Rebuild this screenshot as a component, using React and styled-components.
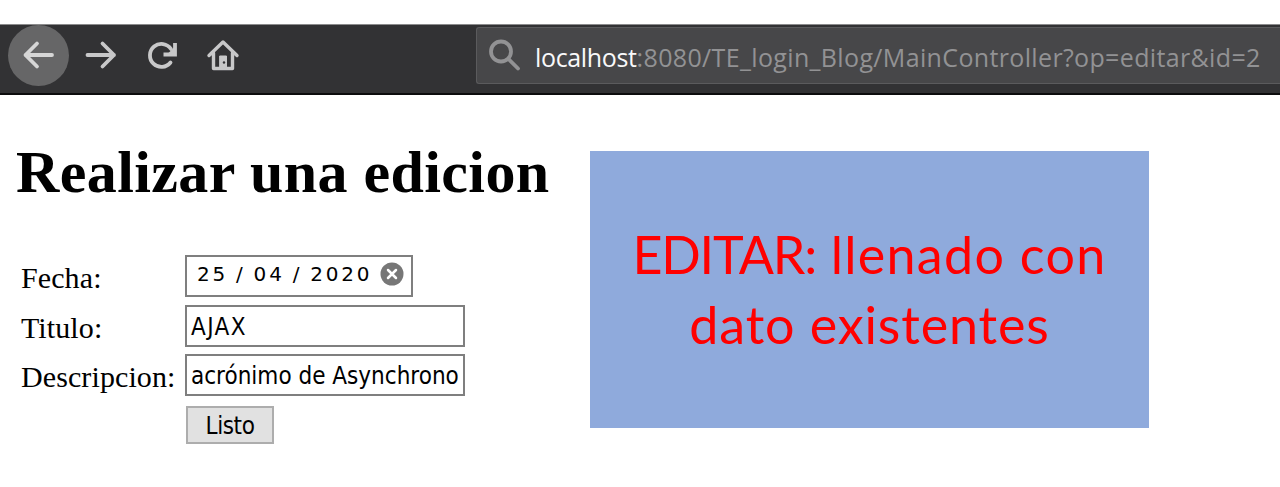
import React from "react";
import styled, { createGlobalStyle } from "styled-components";

const GlobalStyle = createGlobalStyle`
  * { box-sizing: border-box; }
  body { margin: 0; background: #fff; overflow: hidden; }
`;

const Page = styled.div`
  width: 1280px;
  height: 487px;
  padding-top: 24px;
  overflow: hidden;
  color: #000;
  font-family: "Liberation Serif", serif;
`;

const Toolbar = styled.header`
  display: flex;
  align-items: flex-start;
  height: 71px;
  padding-left: 8px;
  background: #323234;
  border-top: 1px solid #8b8b8c;
  border-bottom: 2px solid #0c0c0d;
`;

const NavButtons = styled.nav`
  display: flex;
  align-items: center;
  width: 468px;
  height: 61px;
`;

const NavButton = styled.button`
  display: flex;
  align-items: center;
  justify-content: center;
  width: ${(p) => p.$width}px;
  height: 61px;
  padding: 0 0 1px;
  border: 0;
  border-radius: 50%;
  background: ${(p) => (p.$active ? "#666667" : "transparent")};
  color: ${(p) => (p.$active ? "#d6d6d6" : "#c8c8c9")};
`;

const Icon = styled.svg`
  display: block;
  flex: none;
  fill: none;
  stroke: currentColor;
  stroke-width: 3.8;
  stroke-linecap: round;
  stroke-linejoin: round;
`;

const AddressBar = styled.div`
  display: flex;
  flex: 1;
  align-items: center;
  height: 57px;
  margin-top: 2px;
  padding-left: 11px;
  border: 1px solid #5b5b5d;
  border-right: 0;
  border-radius: 3px 0 0 3px;
  background: #474749;
  color: #929294;
`;

const Url = styled.span`
  padding: 2px 0 0 13px;
  font: 25px/36px "Open Sans", sans-serif;
  letter-spacing: 0.35px;
  white-space: nowrap;
`;

const Host = styled.span`
  color: #f9f9fa;
  letter-spacing: -0.35px;
`;

const Content = styled.main`
  display: flex;
  align-items: flex-start;
`;

const Editor = styled.section`
  width: 590px;
  padding: 43px 0 0 16px;
`;

const Title = styled.h1`
  margin: 0;
  font-size: 60px;
  line-height: 69px;
  letter-spacing: 0.4px;
  white-space: nowrap;
`;

const Form = styled.form`
  display: grid;
  grid-template-columns: 164px 280px;
  grid-auto-rows: 42px;
  row-gap: 7.6px;
  margin-top: 48px;
  padding-left: 5px;
`;

const Label = styled.label`
  padding-top: 5px;
  font-size: 30px;
  line-height: 35px;
  letter-spacing: 0.1px;
  white-space: nowrap;
`;

const Field = styled.div`
  display: flex;
  align-items: center;
  width: ${(p) => p.$width}px;
  height: 42px;
  padding: ${(p) => p.$drop || 0}px 0 0 ${(p) => p.$inset}px;
  border: 2px solid #7f7f7f;
  background: #fff;
  font: 24px/30px "DejaVu Sans Condensed", "DejaVu Sans", sans-serif;
  font-stretch: condensed;
  letter-spacing: ${(p) => p.$spacing || 0}px;
  white-space: nowrap;
`;

const DateParts = styled.div`
  display: flex;
  gap: 8px;
  padding-bottom: 4px;
  font: 20px/28px "DejaVu Sans", sans-serif;
  letter-spacing: 2.8px;
`;

const ClearIcon = styled(Icon)`
  margin: 0 0 4px 8px;
  color: #777;
`;

const Submit = styled.button`
  grid-column: 2;
  width: 88px;
  height: 38px;
  margin: 2px 0 0 1px;
  padding: 2px 0 0;
  border: 2px solid #adadad;
  background: #e1e1e1;
  color: #000;
  font: 24px/30px "DejaVu Sans Condensed", "DejaVu Sans", sans-serif;
  font-stretch: condensed;
  letter-spacing: -0.4px;
`;

const Note = styled.aside`
  display: flex;
  flex-direction: column;
  align-items: center;
  width: 559px;
  height: 277px;
  margin-top: 56px;
  padding-top: 68px;
  background: #8faadc;
  color: #f00;
  font: 52px/70px Lato, sans-serif;
  white-space: nowrap;
`;

const NoteLine = styled.span`
  letter-spacing: ${(p) => p.$spacing}px;
`;

const NoteLead = styled.span`
  letter-spacing: -1.2px;
`;

export default function App() {
  return (
    <>
      <GlobalStyle />
      <Page>
        <Toolbar>
          <NavButtons>
            <NavButton type="button" aria-label="Atrás" $width={61} $active>
              <Icon width="34" height="32" viewBox="0 0 34 32">
                <path d="M30 16H3.500M15 4.500L3.500 16l11.500 11.500" />
              </Icon>
            </NavButton>
            <NavButton type="button" aria-label="Adelante" $width={64}>
              <Icon width="34" height="32" viewBox="0 0 34 32">
                <path d="M3.500 16H30M18.500 4.500L30 16 18.500 27.500" />
              </Icon>
            </NavButton>
            <NavButton type="button" aria-label="Recargar" $width={60}>
              <Icon width="32" height="32" viewBox="0 0 32 32">
                <path d="M23.500 23.500A11.5 11.5 0 1 1 24 10" />
                <path d="M28 4v11.500H16.500" strokeLinecap="butt" strokeLinejoin="miter" />
                <path d="M28 7.500v8h-8z" fill="currentColor" stroke="none" />
              </Icon>
            </NavButton>
            <NavButton type="button" aria-label="Inicio" $width={60}>
              <Icon width="34" height="32" viewBox="0 0 34 32">
                <path d="M3 16.500L17 3l14 13.500M7.500 14v15.500h19V14" strokeWidth="3.4" />
                <path d="M14 17h6.500v12H14z" fill="currentColor" strokeWidth="1" />
                <circle cx="18" cy="23.5" r="1.2" fill="#323234" stroke="none" />
              </Icon>
            </NavButton>
          </NavButtons>
          <AddressBar>
            <Icon width="34" height="34" viewBox="0 0 34 34">
              <circle cx="13" cy="12.500" r="10" />
              <path d="M20.5 20L30 29.500" />
            </Icon>
            <Url>
              <Host>localhost</Host>:8080/TE_login_Blog/MainController?op=editar&amp;id=2
            </Url>
          </AddressBar>
        </Toolbar>
        <Content>
          <Editor>
            <Title>Realizar una edicion</Title>
            <Form>
              <Label>Fecha:</Label>
              <Field $width={228} $inset={10}>
                <DateParts>
                  <span>25</span>
                  <span>/</span>
                  <span>04</span>
                  <span>/</span>
                  <span>2020</span>
                </DateParts>
                <ClearIcon width="24" height="24" viewBox="0 0 24 24">
                  <circle cx="12" cy="12" r="11.500" fill="currentColor" stroke="none" />
                  <path d="M8 8l8 8M16 8l-8 8" stroke="#fff" strokeWidth="2.5" />
                </ClearIcon>
              </Field>
              <Label>Titulo:</Label>
              <Field $width={280} $inset={4} $spacing={1.4} $drop={2}>AJAX</Field>
              <Label>Descripcion:</Label>
              <Field $width={280} $inset={4} $drop={2}>acrónimo de Asynchrono</Field>
              <Submit type="button">Listo</Submit>
            </Form>
          </Editor>
          <Note>
            <NoteLine $spacing={1.3}><NoteLead>EDITAR:</NoteLead> llenado con</NoteLine>
            <NoteLine $spacing={0.9}>dato existentes</NoteLine>
          </Note>
        </Content>
      </Page>
    </>
  );
}
